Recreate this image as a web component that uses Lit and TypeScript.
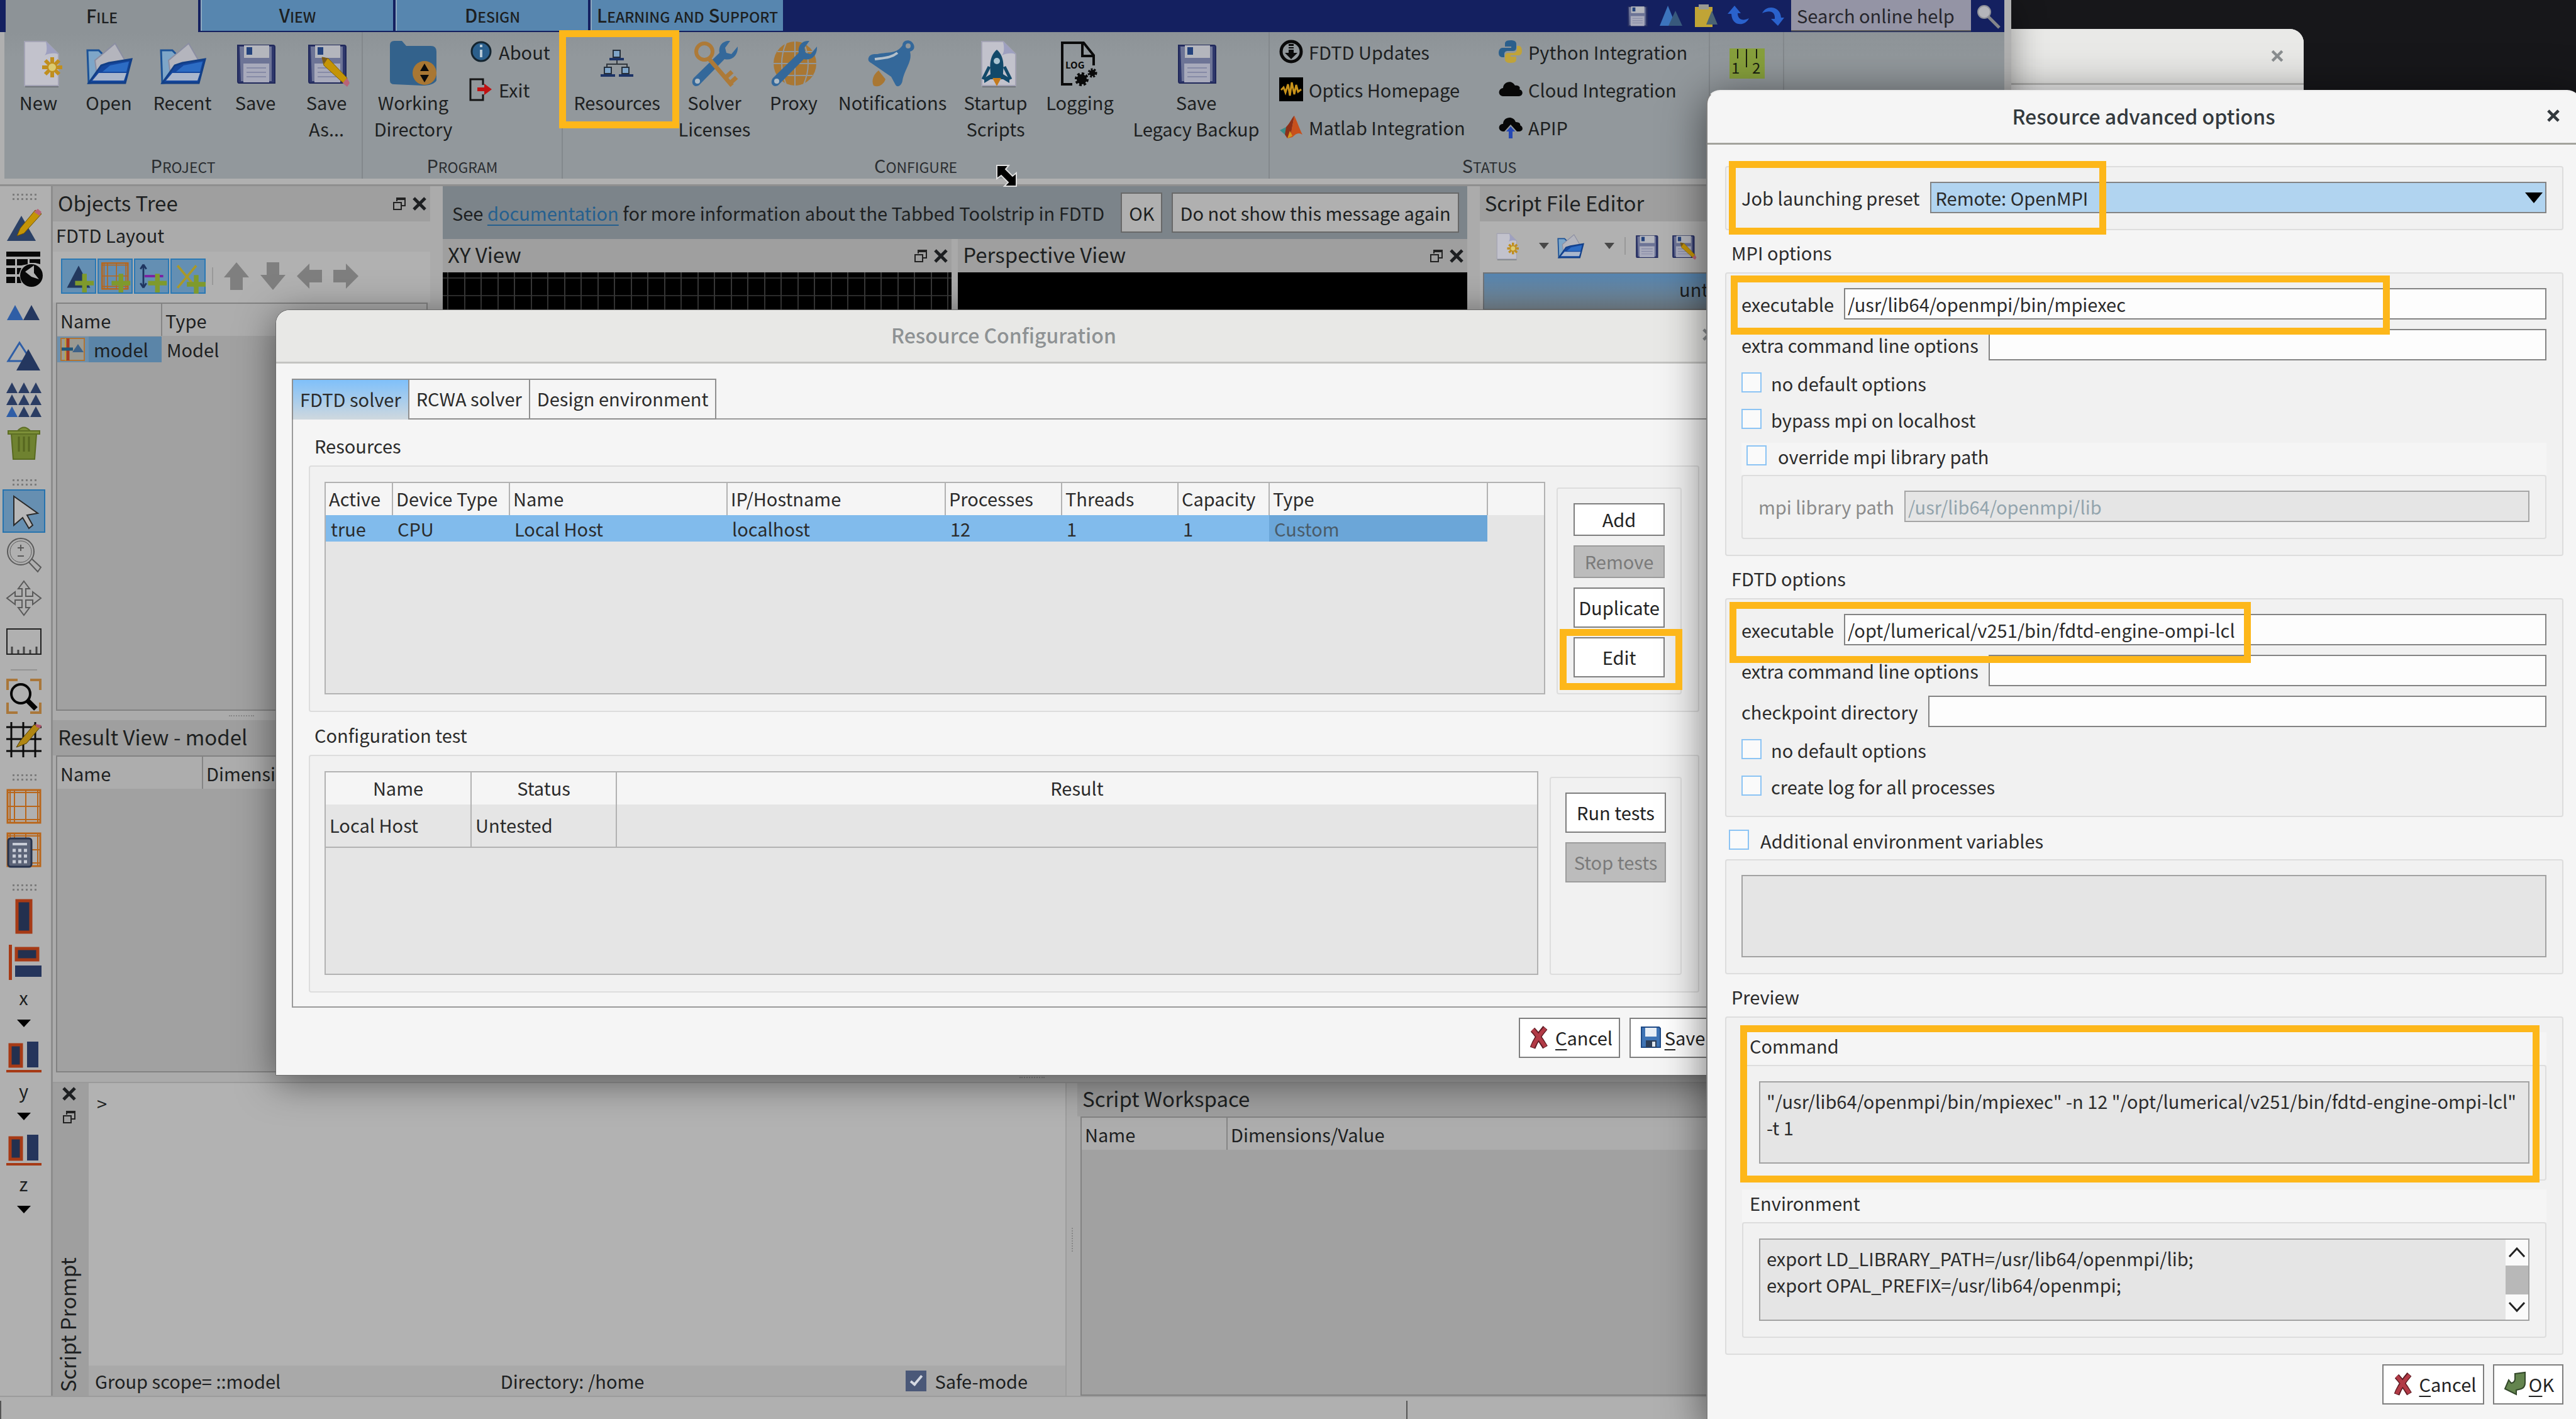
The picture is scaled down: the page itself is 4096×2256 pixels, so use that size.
import { LitElement, html, svg, css, nothing } from "lit";
import { customElement } from "lit/decorators.js";
import { classMap } from "lit/directives/class-map.js";

/* ---------- shared drawing parts ---------- */

const pageShape = svg`
  <path d="M16 4H50L70 24V74H16Z" fill="#c2c2cc" stroke="#a3a3b4" stroke-width="2"/>
  <path d="M50 4C52 14 52 22 48 26C56 22 64 22 70 24Z" fill="#9ea0c0"/>
  <path d="M17 76H70" stroke="#70757a" stroke-width="2"/>`;

const folderShape = svg`
  <path d="M4 18H22L28 24V68L6 70Z" fill="#7ea6c8" stroke="#1c5296" stroke-width="3"/>
  <path d="M16 34L48 7L66 38L20 64Z" fill="#b4b5bd" stroke="#8b8ea2" stroke-width="2"/>
  <path d="M6 70L26 42L38 38L74 32L64 70Z" fill="#15479e" stroke="#123f86" stroke-width="3"/>
  <path d="M12 66L22 54H66L62 66Z" fill="#a9b6cc"/>
  <path d="M40 42L70 36L66 52H28Z" fill="#2c6cc4"/>`;

const floppyShape = svg`
  <path d="M10 10H66Q69 10 69 13V70H12Q10 70 10 67Z" fill="#2e376b" stroke="#20285a" stroke-width="2"/>
  <path d="M13 12H64V67H15Z" fill="#6d7496"/>
  <path d="M20 10H60V30H20Z" fill="#b4b6bd"/>
  <rect x="24" y="13" width="9" height="12" fill="#24427c"/>
  <path d="M19 39H60V69H19Z" fill="#a8aabb"/>
  <path d="M24 46H55M24 53H55M24 60H55" stroke="#868aa6" stroke-width="2"/>`;

const pencilShape = svg`
  <path d="M31 29L41 31L71 62L66 71L34 42Z" fill="#c49406" stroke="#7d5f04" stroke-width="1"/>
  <path d="M31 29L40 31L34 40Z" fill="#7a5a1c"/>
  <path d="M64 70L71 62L75 70L71 76Z" fill="#b86478"/>`;

const wrenchShape = svg`
  <path d="M75 12L65 24L57 22L55 14L63 3C52 2 44 10 46 22L5 62C-1 70 6 79 14 73L54 32C66 35 76 26 75 12Z" fill="#34689a"/>
  <circle cx="11" cy="67" r="4" fill="#aebbc6"/>`;

const triangle = (x: number, y: number, w: number, h: number, c: string) =>
  svg`<path d="M${x + w / 2} ${y}L${x + w} ${y + h}H${x}Z" fill=${c}/>`;

const plusShape = svg`<path d="M34 24H42V36H54V44H42V56H34V44H22V36H34Z" fill="#7f9a2c"/>`;

const orangeGrid = svg`
  <rect x="2" y="2" width="52" height="52" fill="none" stroke="#b9661a" stroke-width="3"/>
  <path d="M6 2V54M13 2V54M31 2V54M50 2V54M2 6H54M2 28H54M2 49H54" stroke="#b9661a" stroke-width="2"/>`;

const axisShape = svg`
  <rect x="6" y="8" width="18" height="34" fill="#23304f" stroke="#a63a16" stroke-width="5"/>
  <rect x="33" y="3" width="18" height="41" fill="#25355c"/>
  <rect x="0" y="48" width="56" height="4" fill="#a63a16"/>`;

/* 76 unit canvas */
const big: Record<string, unknown> = {
  new: svg`${pageShape}<path d="M60 29V61M44 45H76M49 34L71 56M71 34L49 56" stroke="#c08e1e" stroke-width="6"/><circle cx="60" cy="45" r="6" fill="#dccb70"/>`,
  open: folderShape,
  save: floppyShape,
  saveas: svg`${floppyShape}${pencilShape}`,
  workdir: svg`<path d="M1 10Q1 3 8 3H20L27 11H66Q75 11 75 20V66Q70 74 52 74L8 72Q1 72 1 66Z" fill="#33628c"/><circle cx="56" cy="54" r="19" fill="#a97733"/><path d="M56 39L63 51H49ZM56 69L63 57H49Z" fill="#0b0b0b"/>`,
  resources: svg`<g fill="#7fa5c8" stroke="#26303c" stroke-width="2"><rect x="32" y="18" width="11" height="11"/><rect x="18" y="45" width="11" height="10"/><rect x="46" y="45" width="11" height="10"/></g><path d="M26 30H49V34H26ZM12 56H35V60H12ZM41 56H64V60H41Z" fill="#1c3366"/><path d="M38 34V40M22 44V40H54V44" fill="none" stroke="#32383e" stroke-width="2"/>`,
  solver: svg`${wrenchShape}<circle cx="22" cy="20" r="13" fill="none" stroke="#ad7a38" stroke-width="6"/><path d="M29 31L66 74M55 62L66 52M62 71L73 61" stroke="#ad7a38" stroke-width="7" fill="none"/>`,
  proxy: svg`<ellipse cx="40" cy="39" rx="34" ry="35" fill="#a97733"/><path d="M40 4V74M6 39H74M12 20H68M12 58H68M26 6Q12 39 26 72M54 6Q68 39 54 72" stroke="#91979b" stroke-width="2" fill="none"/>${wrenchShape}`,
  notify: svg`<path d="M8 74C4 66 8 56 16 50L27 64C24 72 16 78 8 74Z" fill="#a97733"/><path d="M0 30C2 24 8 24 14 24C34 20 44 24 54 10C54 3 62 0 68 4C75 10 74 18 66 20C70 36 58 46 54 66C53 74 46 78 43 73L36 60L4 38C0 36 -1 33 0 30Z" fill="#34689a"/><circle cx="63" cy="11" r="4" fill="#91979b"/><path d="M10 32C26 30 36 30 46 22" stroke="#b4c0ca" stroke-width="4" fill="none"/>`,
  startup: svg`${pageShape}<path d="M40 17C54 29 50 48 50 56L60 62V70L50 64H30L20 70V62L30 56C30 48 26 29 40 17Z" fill="#12496a"/><circle cx="40" cy="35" r="5" fill="#a9c4d2"/><path d="M33 62H47L40 75Z" fill="#c47a1c"/><path d="M28 44L18 64M52 44L62 64" stroke="#12496a" stroke-width="5"/>`,
  logging: svg`<path d="M60 42V26L44 6H10V72H26" fill="none" stroke="#0a0a0a" stroke-width="4"/><path d="M42 6V27H60" fill="none" stroke="#0a0a0a" stroke-width="4"/><text x="15" y="47" font-family="Noto Sans CJK SC, sans-serif" font-weight="700" font-size="15" fill="#0a0a0a">LOG</text><circle cx="41" cy="64" r="8" fill="#0a0a0a"/><circle cx="41" cy="64" r="9" fill="none" stroke="#0a0a0a" stroke-width="4" stroke-dasharray="4 3"/><circle cx="58" cy="54" r="5" fill="#0a0a0a"/><circle cx="58" cy="54" r="6" fill="none" stroke="#0a0a0a" stroke-width="3" stroke-dasharray="3 2"/>`,
};

/* 40 unit canvas */
const small: Record<string, unknown> = {
  about: svg`<circle cx="20" cy="20" r="15" fill="#2b5f8c" stroke="#14242f" stroke-width="3"/><path d="M20 17V29M20 9V13" stroke="#b5c8d6" stroke-width="4"/>`,
  exit: svg`<path d="M23 13V4H3V37H23V28" fill="none" stroke="#141414" stroke-width="3"/><path d="M14 17H25V11L37 20L25 29V23H14Z" fill="#c01212"/>`,
  updates: svg`<circle cx="20" cy="20" r="16" fill="none" stroke="#0a0a0a" stroke-width="5"/><path d="M16 8H24V11H16ZM16 13H24V15H16ZM16 17H24V22H30L20 32L10 22H16Z" fill="#0a0a0a"/>`,
  optics: svg`<rect x="1" y="1" width="38" height="38" fill="#000"/><path d="M4 21L8 17L11 25L15 12L18 30L21 9L25 28L28 13L31 24L36 20" fill="none" stroke="#c8921a" stroke-width="3"/>`,
  matlab: svg`<path d="M2 25L12 20L18 27L10 32Z" fill="#3c8c88"/><path d="M12 20C18 14 22 4 25 2L20 30L14 38L10 32Z" fill="#8c3018"/><path d="M25 2C29 10 33 22 38 32C32 28 28 30 22 36L14 38L20 28Z" fill="#c8501c"/><path d="M14 38L18 26L22 34Z" fill="#d09a20"/>`,
  python: svg`<path d="M20 2C12 2 11 5 11 8V12H21V14H7C3 14 1 18 1 22C1 27 4 29 7 29H10V24C10 20 13 19 16 19H24C28 19 29 16 29 13V8C29 4 26 2 20 2Z" fill="#2b5f8c"/><path d="M20 38C28 38 29 35 29 32V28H20V26H33C37 26 38 22 38 19C38 14 36 11 33 11H30V16C30 20 27 22 24 22H16C12 22 11 25 11 28V32C11 36 14 38 20 38Z" fill="#c0a33a"/>`,
  cloud: svg`<path d="M8 31C-1 30 0 19 8 18C8 8 22 4 27 14C34 13 36 18 34 20C41 22 40 31 33 31Z" fill="#070707"/>`,
  apip: svg`<path d="M8 27C-1 26 0 15 8 15C8 4 24 1 28 12C35 12 36 16 35 17C41 20 40 27 33 27H30L20 16L10 27Z" fill="#070707"/><path d="M20 19L27 27H23V38H17V27H13Z" fill="#2448b4"/>`,
  redx: svg`<path d="M10 8C14 12 24 26 30 36M30 5C24 12 14 26 10 37" fill="none" stroke="#5c1a22" stroke-width="9"/><path d="M10 8C14 12 24 26 30 35M30 6C24 12 14 26 10 36" fill="none" stroke="#b23a46" stroke-width="6"/>`,
  floppy: svg`<path d="M5 4H33L35 6V36H5Z" fill="#3f74b5" stroke="#1f4a86" stroke-width="2"/><rect x="11" y="5" width="18" height="14" fill="#e8eef5"/><rect x="12" y="25" width="17" height="11" fill="#2c3e58"/><rect x="22" y="27" width="5" height="8" fill="#dfe6ee"/>`,
  enter: svg`<path d="M20 4L36 2V18Q36 28 26 29L22 30V37L4 28L10 14L14 19Q20 18 20 12Z" fill="#63844e" stroke="#33482a" stroke-width="2"/>`,
  triangles: svg`${triangle(2, 4, 26, 32, "#3c74bc")}${triangle(16, 12, 22, 24, "#38597c")}`,
  paste: svg`<path d="M4 6H32V38H4Z" fill="#c0a436"/><rect x="10" y="2" width="16" height="8" fill="#9a9a92"/>${triangle(22, 12, 18, 22, "#4a6474")}`,
  undo: svg`<path d="M2 17L13 4L23 16H18C18 26 26 29 36 24C30 37 9 38 8 17Z" fill="#2a62cc"/>`,
  redo: svg`<path d="M38 23L28 36L17 25H23C24 14 16 10 3 16C9 2 32 4 33 23Z" fill="#2a62cc"/>`,
  magnify: svg`<path d="M18 20L36 38" stroke="#85868a" stroke-width="5"/><circle cx="12" cy="13" r="10" fill="#b4b5ba" stroke="#8e9098" stroke-width="2"/>`,
};

/* 56 unit canvas */
const tool: Record<string, unknown> = {
  editshape: svg`${triangle(1, 12, 46, 40, "#2b4166")}<path d="M46 3L56 9L28 40L17 44L22 32Z" fill="#c49406" stroke="#705204" stroke-width="1"/><path d="M44 6L50 1L56 6L53 12Z" fill="#b86478"/>`,
  texture: svg`<path d="M0 0H54V8H0ZM0 12H14V22H0ZM17 12H34V20L24 22H17ZM37 12H54V20L46 18H37ZM0 26H14V36H0ZM17 26H24L20 36H17ZM0 40H14V50H0ZM17 40H21L24 50H17Z" fill="#080808"/><circle cx="40" cy="38" r="18" fill="#080808"/><path d="M30 32L44 22V34L52 44L40 40Z" fill="#b0b0b0"/>`,
  twotri: svg`${triangle(1, 16, 26, 24, "#2f5ea6")}${triangle(27, 16, 26, 24, "#24375f")}`,
  outlinetri: svg`<path d="M21 7L40 36H3Z" fill="none" stroke="#2f5ea6" stroke-width="3"/>${triangle(16, 17, 38, 34, "#24375f")}`,
  ninetri: svg`${[0, 1, 2].map((r) => [0, 1, 2].map((c) => triangle(c * 19, 1 + r * 19, 18, 17, r === 2 && c === 0 ? "#2f5ea6" : "#2a3c63")))}`,
  trash: svg`<path d="M8 14H48L45 54H11Z" fill="#6f8230" stroke="#596a20" stroke-width="2"/><path d="M3 9H53V14H3ZM18 9Q28 -2 38 9" fill="#7d9038" stroke="#5d6e24" stroke-width="2"/><path d="M20 18V42M28 18V42M36 18V42" stroke="#56661f" stroke-width="3"/>`,
  pointer: svg`<path d="M12 4L50 31L33 34L42 50L36 55L26 38L12 50Z" fill="#b8b8b8" stroke="#2a2a2a" stroke-width="2"/>`,
  zoom: svg`<circle cx="23" cy="23" r="21" fill="none" stroke="#5a5a5a" stroke-width="2"/><circle cx="23" cy="23" r="17" fill="none" stroke="#5a5a5a" stroke-width="1"/><path d="M23 12V22M18 17H28M18 30H28M40 34L55 48L50 55L36 40" fill="none" stroke="#5a5a5a" stroke-width="2"/>`,
  move: svg`<path d="M28 1L37 13H31V25H42V18L55 28L42 38V31H31V43H37L28 55L19 43H25V31H14V38L1 28L14 18V25H25V13H19Z" fill="none" stroke="#5a5a5a" stroke-width="2"/>`,
  ruler: svg`<rect x="1" y="8" width="54" height="40" fill="none" stroke="#222" stroke-width="2"/><path d="M9 36V47M19 41V47M28 36V47M38 41V47M48 36V47" stroke="#444" stroke-width="3"/>`,
  extent: svg`<path d="M2 18V2H18M38 2H54V18M54 38V54H38M18 54H2V38" fill="none" stroke="#a9773a" stroke-width="4"/><circle cx="23" cy="24" r="15" fill="none" stroke="#050505" stroke-width="4"/><path d="M33 34L47 48" stroke="#050505" stroke-width="8"/>`,
  editgrid: svg`<path d="M8 0V56M27 0V56M46 0V56M0 8H56M0 27H56M0 46H56" stroke="#0b0b0b" stroke-width="3"/><path d="M44 4L54 8L32 34L16 40L22 30Z" fill="#b08612" stroke="#4c3b08" stroke-width="1"/><path d="M46 3L56 5L54 10L48 8Z" fill="#b0566c"/>`,
  grid: orangeGrid,
  calcgrid: svg`${orangeGrid}<rect x="3" y="10" width="37" height="45" rx="4" fill="#5c6478" stroke="#26324c" stroke-width="3"/><path d="M10 19H33" stroke="#c8ccd6" stroke-width="4"/><path d="M10 29H33M10 38H33M10 47H33" stroke="#c8ccd6" stroke-width="5" stroke-dasharray="5 4"/>`,
  region: svg`<rect x="17" y="3" width="22" height="50" fill="#23304f" stroke="#a63a16" stroke-width="5"/>`,
  bars: svg`<rect x="4" y="0" width="5" height="56" fill="#a63a16"/><rect x="16" y="6" width="34" height="18" fill="#23304f" stroke="#a63a16" stroke-width="5"/><rect x="14" y="33" width="42" height="18" fill="#25355c"/>`,
  addtri: svg`${triangle(8, 10, 40, 38, "#22385e")}${plusShape}`,
  addgrid: svg`<g transform="translate(4 4) scale(.85)">${orangeGrid}</g>${plusShape}`,
  addaxis: svg`<path d="M14 8V48M14 8L9 16M14 8L19 16M14 48L9 40M14 48L19 40" stroke="#1f3560" stroke-width="3" fill="none"/><path d="M16 28H48" stroke="#7d1fa0" stroke-width="4"/>${plusShape}`,
  addbeam: svg`<path d="M10 10L42 48M42 10L10 48" stroke="#a8992a" stroke-width="4"/><g transform="translate(4 2)">${plusShape}</g>`,
  up: svg`<path d="M28 6L48 30H38V50H18V30H8Z" fill="#7f7f7f"/>`,
  down: svg`<path d="M28 50L48 26H38V6H18V26H8Z" fill="#7f7f7f"/>`,
  left: svg`<path d="M8 28L28 8V18H48V38H28V48Z" fill="#7f7f7f"/>`,
  right: svg`<path d="M48 28L28 8V18H8V38H28V48Z" fill="#7f7f7f"/>`,
  rulerrange: svg`<rect x="0" y="4" width="56" height="48" fill="#87a03c"/><path d="M13 5V20M27 5V34M43 5V20" stroke="#1a1f10" stroke-width="2"/><text x="3" y="44" font-family="Noto Sans CJK SC, sans-serif" font-size="24" fill="#1a1f10">1</text><text x="36" y="44" font-family="Noto Sans CJK SC, sans-serif" font-size="24" fill="#1a1f10">2</text>`,
};

const bigIcon = (n: string) => html`<svg class="big" viewBox="0 0 76 76" aria-hidden="true">${big[n]}</svg>`;
const midIcon = (n: string) => html`<svg class="mid" viewBox="0 0 76 76" aria-hidden="true">${big[n]}</svg>`;
const smallIcon = (n: string) => html`<svg class="small" viewBox="0 0 40 40" aria-hidden="true">${small[n]}</svg>`;
const toolIcon = (n: string) => html`<svg class="tool" viewBox="0 0 56 56" aria-hidden="true">${tool[n]}</svg>`;
const axisIcon = html`<svg class="axis" viewBox="0 0 56 52" aria-hidden="true">${axisShape}</svg>`;
const downArrow = (cls: string) => html`<svg class=${cls} viewBox="0 0 22 12" preserveAspectRatio="none" aria-hidden="true"><path d="M0 0H22L11 12Z"/></svg>`;
const restoreGlyph = html`<svg class="glyph" viewBox="0 0 22 22" aria-hidden="true"><path d="M7 7V2H20V14H15" fill="none" stroke="#222" stroke-width="2"/><path d="M7 3H20" stroke="#222" stroke-width="4"/><rect x="2" y="9" width="12" height="11" fill="none" stroke="#222" stroke-width="2"/></svg>`;
const closeGlyph = html`<svg class="glyph" viewBox="0 0 22 22" aria-hidden="true"><path d="M2 2L20 20M20 2L2 20" stroke="currentColor" stroke-width="5"/></svg>`;

/* Small capitals at four fifths of the full size; a capitalised word keeps a full-size initial. */
const caps = (text: string) =>
  html`<span class="caps">${text.split(" ").map((w) => html`<span class=${classMap({ word: true, lead: /^[A-Z]/.test(w) })}>${w}</span>`)}</span>`;

const sharedStyles = css`
  :host, * { box-sizing: border-box; }
  button, input, select, textarea {
    font: inherit; color: inherit; margin: 0; padding: 0; border: 0; border-radius: 0;
    background: none; appearance: none; outline: none; resize: none;
  }
  button { white-space: nowrap; }
  svg { display: block; flex: none; overflow: visible; }
  .small { width: 40px; height: 40px; }
  .mid { width: 44px; height: 44px; }
  .glyph { width: 22px; height: 22px; }
  .frame { position: absolute; border: 11px solid #fdb71a; pointer-events: none; z-index: 2; }
  .titlebar {
    height: 85px; display: flex; align-items: center; justify-content: center; padding-bottom: 5px;
    position: relative; font-size: 32px; line-height: 46px; font-weight: 500;
  }
  .titlebar .close { position: absolute; right: 32px; }
  .titlebar .close svg { width: 20px; height: 20px; }
  .group { border: 2px solid #dddddd; border-radius: 4px; background: #f1f1f1; position: relative; }
  .push {
    height: 64px; border: 2px solid #7e7e7e; background: #ffffff; display: flex;
    align-items: center; justify-content: center; gap: 6px; color: #222; padding-bottom: 2px;
  }
  .push:disabled { background: #bcbcbc; border-color: #9c9c9c; color: #7a7a7a; }
  .push.short { height: 52px; }
  u { text-underline-offset: 6px; text-decoration-thickness: 2px; }
`;

/* ---------- advanced options window ---------- */

@customElement("advanced-options")
class AdvancedOptions extends LitElement {
  static styles = [sharedStyles, css`
    :host {
      display: flex; flex-direction: column; background: #f5f5f5; color: #2b2b2b;
      border-radius: 22px 22px 0 0; border: 2px solid #7f7f7f; border-top-color: #ededed;
      box-shadow: 0 10px 70px rgba(0, 0, 0, .55);
    }
    .titlebar { color: #33393d; border-bottom: 3px solid #a3a39d; }
    .body { padding: 34px 26px 24px 28px; display: flex; flex-direction: column; }
    .fields { padding: 23px 25px 25px 24px; display: flex; flex-direction: column; gap: 15px; }
    .heading { padding: 14px 10px 11px; line-height: 42px; }
    .field { display: flex; align-items: center; gap: 16px; height: 50px; white-space: nowrap; }
    .field input, .field select {
      flex: 1; min-width: 0; height: 50px; border: 2px solid #838383; background: #fdfdfd; padding: 0 4px;
    }
    .field select { background: #b1d4f0; padding: 0 7px; width: 100%; }
    .pick { flex: 1; position: relative; display: flex; }
    .pick svg { position: absolute; right: 6px; top: 17px; width: 28px; height: 17px; fill: #000; }
    .field input:disabled { background: #e5e5e5; border-color: #a5a5a5; color: #92a4ad; }
    .off { color: #8a8a8a; }
    .check { display: flex; gap: 15px; height: 43px; line-height: 42px; align-items: flex-start; }
    .check input { width: 32px; height: 32px; margin-top: 4px; border: 2px solid #8cc4f4; background: #fafafa; flex: none; }
    .check.strip { background: #f5f5f5; height: 51px; padding-left: 8px; gap: 18px; margin-bottom: -15px; }
    .check.outer { padding: 16px 0 0 6px; height: 67px; gap: 18px; }
    .inner { padding: 23px 25px 25px; }
    textarea, .scroller {
      display: block; width: 100%; height: 131px; border: 2px solid #a2a2a2; background: #e5e5e5;
      line-height: 42px; padding: 8px 10px; overflow: hidden; color: #2b2b2b;
    }
    .strip-title { background: #f5f5f5; line-height: 42px; height: 52px; padding: 0 12px; }
    .preview { padding: 23px 25px 25px; }
    .preview .group { padding: 24px 25px 25px; }
    .preview .group + .strip-title { margin-top: 14px; }
    .scroller { display: flex; padding: 0; }
    .scroller textarea { border: 0; flex: 1; height: 100%; }
    .bar { width: 36px; background: #fafafa; display: flex; flex-direction: column; align-items: center; }
    .bar i { width: 100%; height: 46px; background: #b8b8b8; }
    .bar button { flex: 1; }
    .bar svg { width: 26px; height: 16px; fill: none; stroke: #222; stroke-width: 3; }
    .actions { display: flex; justify-content: flex-end; gap: 14px; margin-top: 15px; }
    .cancel { width: 162px; } .ok { width: 112px; gap: 2px; }
    .f1 { left: 4px; top: -10px; width: 600px; height: 117px; }
    .f2 { left: 7px; top: 3px; width: 1048px; height: 94px; }
    .f3 { left: 5px; top: 4px; width: 829px; height: 97px; }
    .f4 { left: 22px; top: 12px; width: 1271px; height: 250px; }
  `];

  private field(id: string, label: string, value = "", disabled = false) {
    return html`<div class="field">
      <label for=${id} class=${classMap({ off: disabled })}>${label}</label>
      <input id=${id} type="text" .value=${value} ?disabled=${disabled} />
    </div>`;
  }

  private check(id: string, label: string, cls = "") {
    return html`<div class="check ${cls}"><input id=${id} type="checkbox" /><label for=${id}>${label}</label></div>`;
  }

  render() {
    return html`
      <div class="titlebar">Resource advanced options<button class="close" aria-label="Close">${closeGlyph}</button></div>
      <div class="body">
        <div class="group fields">
          <div class="field">
            <label for="preset">Job launching preset</label>
            <div class="pick"><select id="preset"><option>Remote: OpenMPI</option></select>${downArrow("")}</div>
          </div>
          <span class="frame f1"></span>
        </div>
        <div class="heading">MPI options</div>
        <div class="group fields">
          ${this.field("mpi-exe", "executable", "/usr/lib64/openmpi/bin/mpiexec")}
          ${this.field("mpi-extra", "extra command line options")}
          ${this.check("mpi-nodef", "no default options")}
          ${this.check("mpi-bypass", "bypass mpi on localhost")}
          ${this.check("mpi-over", "override mpi library path", "strip")}
          <div class="group inner">${this.field("mpi-lib", "mpi library path", "/usr/lib64/openmpi/lib", true)}</div>
          <span class="frame f2"></span>
        </div>
        <div class="heading">FDTD options</div>
        <div class="group fields">
          ${this.field("fdtd-exe", "executable", "/opt/lumerical/v251/bin/fdtd-engine-ompi-lcl")}
          ${this.field("fdtd-extra", "extra command line options")}
          ${this.field("fdtd-check", "checkpoint directory")}
          ${this.check("fdtd-nodef", "no default options")}
          ${this.check("fdtd-log", "create log for all processes")}
          <span class="frame f3"></span>
        </div>
        ${this.check("env-add", "Additional environment variables", "outer")}
        <div class="group fields"><textarea aria-label="Additional environment variables" disabled></textarea></div>
        <div class="heading">Preview</div>
        <div class="group preview">
          <div class="strip-title">Command</div>
          <div class="group">
            <textarea readonly aria-label="Command" .value=${'"/usr/lib64/openmpi/bin/mpiexec" -n 12 "/opt/lumerical/v251/bin/fdtd-engine-ompi-lcl" -t 1'}></textarea>
          </div>
          <div class="strip-title">Environment</div>
          <div class="group">
            <div class="scroller">
              <textarea readonly aria-label="Environment" .value=${"export LD_LIBRARY_PATH=/usr/lib64/openmpi/lib;\nexport OPAL_PREFIX=/usr/lib64/openmpi;"}></textarea>
              <div class="bar">
                <button aria-label="Scroll up"><svg viewBox="0 0 26 16"><path d="M1 15L13 2L25 15"/></svg></button>
                <i></i>
                <button aria-label="Scroll down"><svg viewBox="0 0 26 16"><path d="M1 1L13 14L25 1"/></svg></button>
              </div>
            </div>
          </div>
          <span class="frame f4"></span>
        </div>
        <div class="actions">
          <button class="push cancel">${smallIcon("redx")}<span><u>C</u>ancel</span></button>
          <button class="push ok">${smallIcon("enter")}<span><u>O</u>K</span></button>
        </div>
      </div>`;
  }
}

/* ---------- resource configuration window ---------- */

@customElement("resource-configuration")
class ResourceConfiguration extends LitElement {
  static styles = [sharedStyles, css`
    :host {
      display: flex; flex-direction: column; background: #f5f5f5; color: #2b2b2b;
      border-radius: 22px 22px 0 0; border: 1px solid #6c6c6c;
      box-shadow: 0 10px 60px rgba(0, 0, 0, .5);
    }
    .titlebar { background: #e8e8e6; color: #8e9294; border-bottom: 3px solid #c4c4c2; border-radius: 22px 22px 0 0; }
    .titlebar .close { right: 26px; }
    .body { padding: 24px 25px 27px; }
    .tabs { display: flex; }
    .tabs button {
      height: 65px; padding: 0 11px 3px; border: 2px solid #8f8f8f; border-left-width: 0;
      margin-bottom: -2px; line-height: 42px;
    }
    .tabs button.on { border-left-width: 2px; background: linear-gradient(#7fc0fa, #cfd8de); border-bottom: 0; }
    .pane { border: 2px solid #9a9a9a; padding: 20px 24px 22px 25px; }
    .heading { line-height: 42px; padding: 0 9px 11px; }
    .pane .group { padding: 24px 26px 26px 23px; display: flex; gap: 18px; }
    .group + .heading { margin-top: 15px; }
    .list { flex: 1; height: 338px; border: 2px solid #b2b2b2; background: #e5e5e5; }
    .list.low { height: 324px; }
    table { border-collapse: collapse; table-layout: fixed; width: 100%; line-height: 42px; }
    th, td { font-weight: 400; text-align: left; padding: 0 5px 3px; white-space: nowrap; }
    th { background: #f5f5f5; height: 51px; border-right: 2px solid #b2b2b2; }
    th:last-child { border-right: 0; }
    td { height: 42px; padding: 0 8px; background: #81bbec; line-height: 40px; }
    td.custom { background: #6ba6d8; color: #4a5b68; }
    td.rest { background: none; }
    .low th { text-align: center; }
    .low td { background: none; height: 68px; padding: 0 6px 3px; border-right: 2px solid #b2b2b2; border-bottom: 2px solid #b2b2b2; }
    .low td:last-child { border-right: 0; }
    .pane .side { width: 205px; margin-top: 9px; padding: 23px 25px; display: flex; flex-direction: column; gap: 15px; }
    .pane .side.wide { width: 210px; padding: 23px; }
    .f5 { left: 3px; top: 223px; width: 195px; height: 97px; }
    .actions { display: flex; gap: 15px; justify-content: flex-end; padding: 16px 3px 0 0; }
    .cancel { width: 161px; } .save { width: 134px; gap: 2px; }
  `];

  private cols = [106, 186, 346, 347, 185, 185, 145, 347, 90];
  private heads = ["Active", "Device Type", "Name", "IP/Hostname", "Processes", "Threads", "Capacity", "Type", ""];
  private cells = ["true", "CPU", "Local Host", "localhost", "12", "1", "1", "Custom", ""];

  render() {
    return html`
      <div class="titlebar">Resource Configuration<button class="close" aria-label="Close">${closeGlyph}</button></div>
      <div class="body">
        <div class="tabs">
          <button class="on">FDTD solver</button><button>RCWA solver</button><button>Design environment</button>
        </div>
        <div class="pane">
          <div class="heading">Resources</div>
          <div class="group">
            <div class="list"><table>
              <colgroup>${this.cols.map((w) => html`<col style="width:${w}px" />`)}</colgroup>
              <thead><tr>${this.heads.map((h) => html`<th>${h}</th>`)}</tr></thead>
              <tbody><tr>${this.cells.map((c, i) => html`<td class=${classMap({ custom: i === 7, rest: i === 8 })}>${c}</td>`)}</tr></tbody>
            </table></div>
            <div class="group side">
              <button class="push short">Add</button>
              <button class="push short" disabled>Remove</button>
              <button class="push">Duplicate</button>
              <button class="push">Edit</button>
              <span class="frame f5"></span>
            </div>
          </div>
          <div class="heading">Configuration test</div>
          <div class="group">
            <div class="list low"><table>
              <colgroup><col style="width:231px" /><col style="width:231px" /><col /></colgroup>
              <thead><tr><th>Name</th><th>Status</th><th>Result</th></tr></thead>
              <tbody><tr><td>Local Host</td><td>Untested</td><td></td></tr></tbody>
            </table></div>
            <div class="group side wide">
              <button class="push">Run tests</button>
              <button class="push" disabled>Stop tests</button>
            </div>
          </div>
        </div>
        <div class="actions">
          <button class="push cancel">${smallIcon("redx")}<span><u>C</u>ancel</span></button>
          <button class="push save">${smallIcon("floppy")}<span><u>S</u>ave</span></button>
        </div>
      </div>`;
  }
}

/* ---------- main solver window ---------- */

interface RibbonItem { icon: string; label: string[]; width: number; mark?: boolean; }

@customElement("solver-window")
class SolverWindow extends LitElement {
  static styles = [sharedStyles, css`
    :host {
      display: flex; flex-direction: column; background: #b0b0b0; color: #1d1f21; line-height: 42px;
      box-shadow: 0 10px 50px rgba(0, 0, 0, .4);
    }
    .caps { display: inline-flex; gap: 7px; align-items: baseline; text-transform: uppercase; font-size: 23px; }
    .word { display: inline-block; }
    .word.lead::first-letter { font-size: 29px; }
    .top { display: flex; background: #142060; height: 51px; padding-left: 9px; margin-right: 11px; }
    .top .tab {
      width: 310px; height: 49px; background: #5786af; border-right: 4px solid #142060; border-left: 2px solid #8fa9c0;
      font-weight: 500; flex: none;
    }
    .top .tab.on { background: #8d9397; height: 51px; border-left: 0; }
    .quick { margin-left: auto; display: flex; align-items: center; gap: 14px; padding: 0 9px 2px 0; }
    .quick .mid { width: 40px; height: 40px; }
    .search { width: 286px; height: 50px; background: #9494a5; padding: 0 9px; border-bottom: 2px solid #555; }
    .search::placeholder { color: #26262c; opacity: 1; }
    .find { width: 53px; padding: 0 9px; display: flex; align-items: center; }
    .ribbon { display: flex; margin: 0 11px 0 7px; height: 233px; background: linear-gradient(#8d9397, #92989c 40px); }
    .rgroup { display: flex; flex-direction: column; border-right: 2px solid #83888c; }
    .rgroup:last-child { border-right: 0; }
    .items { display: flex; flex: 1; }
    .rlabel { text-align: center; height: 43px; color: #2b2e31; }
    .rbtn { display: flex; flex-direction: column; align-items: center; padding-top: 11px; position: relative; }
    .rbtn span { white-space: nowrap; }
    .big { width: 76px; height: 76px; margin-bottom: 3px; }
    .f6 { left: -6px; top: -3px; width: 191px; height: 156px; }
    .slist { display: flex; flex-direction: column; padding: 1px 0 0 8px; }
    .slist button { display: flex; align-items: center; gap: 8px; height: 60px; }
    .status .slist { padding-left: 14px; width: 349px; }
    .range { padding: 22px 29px 0 31px; }
    .tool { width: 56px; height: 56px; }
    .edge { height: 12px; border-bottom: 3px solid #8f8f8f; flex: none; }
    .work { flex: 1; display: flex; min-height: 0; }
    .toolbox { width: 84px; border-right: 3px solid #8d8d8d; display: flex; flex-direction: column; align-items: center; padding-right: 6px; }
    .toolbox button { width: 68px; height: 69px; display: flex; align-items: center; justify-content: center; flex: none; }
    .toolbox button.on { background: #668fb1; border: 2px solid #2673ae; }
    .dots {
      width: 40px; height: 12px; margin: 22px 0 6px;
      background: radial-gradient(circle, #7c7c7c 2px, transparent 2px) 0 0 / 7px 7px;
    }
    .dots.first { margin: 10px 0 6px; }
    .dots.high { margin-top: 19px; }
    .rule { width: 42px; height: 2px; background: #939393; margin: 10px 0 6px; }
    .bend { height: 4px; }
    .toolbox .axis { width: 56px; height: 52px; }
    .toolbox b { font-weight: 400; line-height: 42px; }
    .tri { width: 22px; height: 12px; margin: 15px 0 20px; fill: #000; }
    .toolbox .axisbtn { height: 59px; padding-bottom: 7px; }
    .docks { flex: 1; display: flex; flex-direction: column; min-width: 0; }
    .upper { flex: 1; display: flex; min-height: 0; }
    .lower { height: 499px; display: flex; border-top: 2px solid #9a9a9a; }
    .split { height: 15px; background: #ababab; display: flex; justify-content: center; align-items: center; flex: none; }
    .split::after { content: ""; width: 40px; border-top: 2px dotted #888; }
    .left { width: 600px; display: flex; flex-direction: column; background: #ababab; }
    .dockbar {
      height: 56px; background: #9f9f9f; display: flex; align-items: center; gap: 10px; padding: 0 6px 0 8px;
      font-size: 33px; line-height: 46px; flex: none; white-space: nowrap;
    }
    .dockbar > :first-child { margin: 0 auto 5px 0; }
    .dockbar.thin { height: 53px; }
    .layout { padding: 0 5px; height: 48px; line-height: 42px; flex: none; }
    .tools { display: flex; align-items: center; height: 81px; background: #b1b1b1; padding: 0 0 4px 13px; gap: 2px; flex: none; }
    .tools .tog { width: 56px; height: 56px; background: #648fb3; border: 2px solid #2a78b4; }
    .tools .tog .tool { width: 52px; height: 52px; }
    .tools .bar { width: 2px; height: 28px; background: #999; margin: 0 7px 0 8px; }
    .tbl { margin: 0 4px 0 5px; border: 2px solid #828282; background: #a1a1a1; flex: 648 1 0; overflow: hidden; }
    .tbl.low { flex: 502 1 0; }
    table { border-collapse: collapse; table-layout: fixed; width: 100%; line-height: 42px; }
    th { background: #adadad; height: 51px; padding: 0 5px; font-weight: 400; text-align: left; border-right: 2px solid #858585; white-space: nowrap; }
    th:last-child { border-right: 0; }
    td { padding: 0 8px; }
    .node { padding: 0; }
    .node div { display: flex; background: #5b85a8; height: 41px; line-height: 40px; }
    .node svg { width: 50px; height: 41px; background: #6d90ad; margin-right: 8px; }
    .vgap { width: 20px; background: #ababab; flex: none; }
    .center { flex: 1628; display: flex; flex-direction: column; min-width: 0; }
    .notice { height: 84px; background: #7c848a; display: flex; align-items: center; padding: 0 13px 0 15px; gap: 15px; white-space: nowrap; flex: none; }
    .notice span { margin-right: auto; }
    .notice a { color: #25608f; text-underline-offset: 6px; }
    .notice button { height: 64px; border: 2px solid #686868; background: #b0b0b0; padding: 0 11px; }
    .views { flex: 1; display: flex; gap: 10px; background: #a9a9a9; min-height: 0; }
    .view { flex: 1; display: flex; flex-direction: column; }
    .canvas { flex: 1; background: #000; }
    .canvas.lines {
      background:
        repeating-linear-gradient(90deg, transparent 0 7px, #383838 7px 9px, transparent 9px 34px, #383838 34px 36px, transparent 36px 53px),
        repeating-linear-gradient(transparent 0 8px, #2e2e2e 8px 10px, transparent 10px 28px), #000;
    }
    .editor { flex: 845; display: flex; flex-direction: column; min-width: 0; }
    .editor .tools { gap: 0; padding: 0 0 4px 18px; }
    .editor .tools .bar { margin: 0 11px 0 4px; }
    .editor .tools .mid + .mid { margin-left: 14px; }
    .drop { width: 16px; height: 10px; fill: #484848; margin: 0 12px 0 32px; }
    .filetab { margin: 0 108px 0 5px; height: 60px; border: 2px solid #707478; background: linear-gradient(#5685b0, #7a8892); text-align: center; line-height: 48px; }
    .vtitle { width: 57px; background: #9f9f9f; display: flex; flex-direction: column; align-items: center; gap: 15px; padding: 6px 6px 6px 0; font-size: 33px; line-height: 46px; }
    .vtitle span { writing-mode: vertical-rl; transform: rotate(180deg); margin: auto 5px 0 0; }
    .prompt { width: 1555px; display: flex; flex-direction: column; border-right: 2px solid #9d9d9d; }
    .prompt p { flex: 1; margin: 0; padding: 10px 13px; background: #b2b2b2; }
    .foot { height: 48px; background: #a9a9a9; display: flex; align-items: center; padding: 0 60px 0 10px; }
    .foot > * { flex: 1; }
    .foot .safe { display: flex; align-items: center; gap: 13px; flex: none; }
    .foot .safe input { width: 33px; height: 33px; background: #4a5878; position: relative; }
    .foot .safe input::after {
      content: ""; position: absolute; left: 12px; top: 4px; width: 6px; height: 16px;
      border: solid #d5d9e2; border-width: 0 4px 4px 0; transform: rotate(40deg);
    }
    .vsplit { width: 17px; background: #ababab; display: flex; align-items: center; justify-content: center; }
    .vsplit::after { content: ""; height: 38px; border-left: 2px dotted #888; }
    .space { flex: 1; display: flex; flex-direction: column; background: #ababab; }
    .statusbar { height: 37px; border-top: 2px solid #9c9c9c; padding: 6px 0 0; display: flex; flex: none; }
    .statusbar i { width: 2px; background: #555; }
    .statusbar i + i { margin-left: 2234px; }
    .cursor { position: absolute; left: 1584px; top: 262px; width: 36px; height: 36px; }
  `];

  private project: RibbonItem[] = [
    { icon: "new", label: ["New"], width: 108 }, { icon: "open", label: ["Open"], width: 116 },
    { icon: "open", label: ["Recent"], width: 118 }, { icon: "save", label: ["Save"], width: 114 },
    { icon: "saveas", label: ["Save", "As..."], width: 112 },
  ];
  private configure: RibbonItem[] = [
    { icon: "resources", label: ["Resources"], width: 172, mark: true },
    { icon: "solver", label: ["Solver", "Licenses"], width: 138 }, { icon: "proxy", label: ["Proxy"], width: 114 },
    { icon: "notify", label: ["Notifications"], width: 200 }, { icon: "startup", label: ["Startup", "Scripts"], width: 128 },
    { icon: "logging", label: ["Logging"], width: 140 }, { icon: "save", label: ["Save", "Legacy Backup"], width: 230 },
  ];

  private rbtn(i: RibbonItem) {
    return html`<button class="rbtn" style="width:${i.width}px">
      ${bigIcon(i.icon)}${i.label.map((l) => html`<span>${l}</span>`)}
      ${i.mark ? html`<i class="frame f6"></i>` : nothing}
    </button>`;
  }

  private slist(items: [string, string][]) {
    return html`<div class="slist">${items.map(([i, l]) => html`<button>${smallIcon(i)}${l}</button>`)}</div>`;
  }

  private dockbar(title: string, cls = "") {
    return html`<div class="dockbar ${cls}"><span>${title}</span>
      <button aria-label="Float ${title}">${restoreGlyph}</button>
      <button aria-label="Close ${title}">${closeGlyph}</button></div>`;
  }

  private toolButtons(names: string[], on = "") {
    return names.map((n) => html`<button class=${classMap({ on: n === on })} aria-label=${n}>${toolIcon(n)}</button>`);
  }

  private axis(letter: string, last = false) {
    return html`<b>${letter}</b>${downArrow("tri")}
      ${last ? nothing : html`<button class="axisbtn" aria-label="align">${axisIcon}</button>`}`;
  }

  render() {
    return html`
      <div class="top">
        <button class="tab on">${caps("File")}</button><button class="tab">${caps("View")}</button>
        <button class="tab">${caps("Design")}</button><button class="tab">${caps("Learning and Support")}</button>
        <div class="quick">
          ${midIcon("save")}${smallIcon("triangles")}${smallIcon("paste")}${smallIcon("undo")}${smallIcon("redo")}
        </div>
        <input class="search" type="text" aria-label="Search online help" placeholder="Search online help" />
        <button class="find" aria-label="Search">${smallIcon("magnify")}</button>
      </div>
      <div class="ribbon">
        <div class="rgroup"><div class="items">${this.project.map((i) => this.rbtn(i))}</div><div class="rlabel">${caps("Project")}</div></div>
        <div class="rgroup">
          <div class="items">
            ${this.rbtn({ icon: "workdir", label: ["Working", "Directory"], width: 160 })}
            <div style="width:156px">${this.slist([["about", "About"], ["exit", "Exit"]])}</div>
          </div>
          <div class="rlabel">${caps("Program")}</div>
        </div>
        <div class="rgroup"><div class="items">${this.configure.map((i) => this.rbtn(i))}</div><div class="rlabel">${caps("Configure")}</div></div>
        <div class="rgroup status">
          <div class="items">
            ${this.slist([["updates", "FDTD Updates"], ["optics", "Optics Homepage"], ["matlab", "Matlab Integration"]])}
            ${this.slist([["python", "Python Integration"], ["cloud", "Cloud Integration"], ["apip", "APIP"]])}
          </div>
          <div class="rlabel">${caps("Status")}</div>
        </div>
        <div class="rgroup"><div class="range">${toolIcon("rulerrange")}</div></div>
        <div class="rgroup"></div>
      </div>
      <div class="edge"></div>
      <div class="work">
        <div class="toolbox">
          <span class="dots first"></span>
          ${this.toolButtons(["editshape", "texture", "twotri", "outlinetri", "ninetri", "trash"])}
          <span class="dots"></span>
          ${this.toolButtons(["pointer", "zoom", "move", "ruler"], "pointer")}
          <span class="rule"></span>
          ${this.toolButtons(["extent", "editgrid"])}
          <span class="dots high"></span>
          ${this.toolButtons(["grid", "calcgrid"])}
          <span class="dots high"></span>
          ${this.toolButtons(["region"])}<span class="bend"></span>${this.toolButtons(["bars"])}
          ${this.axis("x")}${this.axis("y")}${this.axis("z", true)}
        </div>
        <div class="docks">
          <div class="upper">
            <div class="left">
              ${this.dockbar("Objects Tree")}
              <div class="layout">FDTD Layout</div>
              <div class="tools">
                ${["addtri", "addgrid", "addaxis", "addbeam"].map((n) => html`<button class="tog" aria-label=${n}>${toolIcon(n)}</button>`)}
                <span class="bar"></span>
                ${["up", "down", "left", "right"].map((n) => html`<button class="plain" aria-label=${n}>${toolIcon(n)}</button>`)}
              </div>
              <div class="tbl"><table>
                <colgroup><col style="width:166px" /><col /></colgroup>
                <thead><tr><th>Name</th><th>Type</th></tr></thead>
                <tbody><tr><td class="node"><div>
                  <svg viewBox="0 0 50 41"><rect x="6" y="3" width="37" height="35" fill="#9a9a92" stroke="#b07434" stroke-width="2"/><path d="M17 3V38" stroke="#a83a1e" stroke-width="5"/><path d="M13 3V38" stroke="#bda23c" stroke-width="2"/><path d="M7 20H25" stroke="#1f5578" stroke-width="5"/><path d="M33 12L42 25H24Z" fill="#3d6288"/></svg>model</div></td><td>Model</td></tr></tbody>
              </table></div>
              <div class="split"></div>
              <div class="dockbar"><span>Result View - model</span></div>
              <div class="tbl low"><table>
                <colgroup><col style="width:231px" /><col /></colgroup>
                <thead><tr><th>Name</th><th>Dimensions/Value</th></tr></thead>
              </table></div>
            </div>
            <div class="vgap"></div>
            <div class="center">
              <div class="notice">
                <span>See <a href="#documentation">documentation</a> for more information about the Tabbed Toolstrip in FDTD</span>
                <button>OK</button><button>Do not show this message again</button>
              </div>
              <div class="views">
                <div class="view">${this.dockbar("XY View", "thin")}<div class="canvas lines"></div></div>
                <div class="view">${this.dockbar("Perspective View", "thin")}<div class="canvas"></div></div>
              </div>
            </div>
            <div class="vgap"></div>
            <div class="editor">
              <div class="dockbar"><span>Script File Editor</span></div>
              <div class="tools">
                ${midIcon("new")}${downArrow("drop")}${midIcon("open")}${downArrow("drop")}
                <span class="bar"></span>${midIcon("save")}${midIcon("saveas")}
              </div>
              <div class="filetab">untitled</div>
            </div>
          </div>
          <div class="split"></div>
          <div class="lower">
            <div class="vtitle">${closeGlyph}${restoreGlyph}<span>Script Prompt</span></div>
            <div class="prompt">
              <p>&gt;</p>
              <div class="foot">
                <span>Group scope= ::model</span><span>Directory: /home</span>
                <div class="safe"><input id="safe" type="checkbox" .checked=${true} /><label for="safe">Safe-mode</label></div>
              </div>
            </div>
            <div class="vsplit"></div>
            <div class="space">
              <div class="dockbar thin"><span>Script Workspace</span></div>
              <div class="tbl"><table>
                <colgroup><col style="width:231px" /><col /></colgroup>
                <thead><tr><th>Name</th><th>Dimensions/Value</th></tr></thead>
              </table></div>
            </div>
          </div>
        </div>
      </div>
      <div class="statusbar"><i></i><i></i></div>
      <svg class="cursor" viewBox="0 0 36 36"><path d="M1 1H20L15 7L26 18L32 13V34H13L19 28L8 17L1 22Z" fill="#000" stroke="#ddd" stroke-width="2"/></svg>`;
  }
}

/* ---------- desktop ---------- */

@customElement("app-root")
class AppRoot extends LitElement {
  static styles = css`
    :host { display: block; }
    .desktop {
      position: relative; min-height: 100vh; overflow: hidden; background: #17171a;
      font-family: "Noto Sans CJK SC", "Noto Sans", sans-serif; font-size: 29px; line-height: 42px;
    }
    .back { position: absolute; left: 2600px; width: 1063px; top: 46px; height: 300px; border-radius: 22px 22px 0 0; background: #f1f1f1; }
    .back div { height: 86px; border-bottom: 3px solid #bfbfbd; background: #e9e9e7; border-radius: 22px 22px 0 0; display: flex; align-items: center; justify-content: flex-end; padding-right: 32px; }
    .back svg { width: 20px; height: 20px; }
    .main { position: absolute; left: 0; right: 898px; top: 0; bottom: 0; }
    .config { position: absolute; left: 438px; width: 2316px; top: 492px; }
    .advanced { position: absolute; left: 2713px; right: -8px; top: 143px; min-height: 2130px; }
  `;

  render() {
    return html`<div class="desktop">
      <div class="back"><div><svg viewBox="0 0 18 18" aria-hidden="true"><path d="M2 2L16 16M16 2L2 16" stroke="#8a8e90" stroke-width="4"/></svg></div></div>
      <solver-window class="main"></solver-window>
      <resource-configuration class="config"></resource-configuration>
      <advanced-options class="advanced"></advanced-options>
    </div>`;
  }
}
